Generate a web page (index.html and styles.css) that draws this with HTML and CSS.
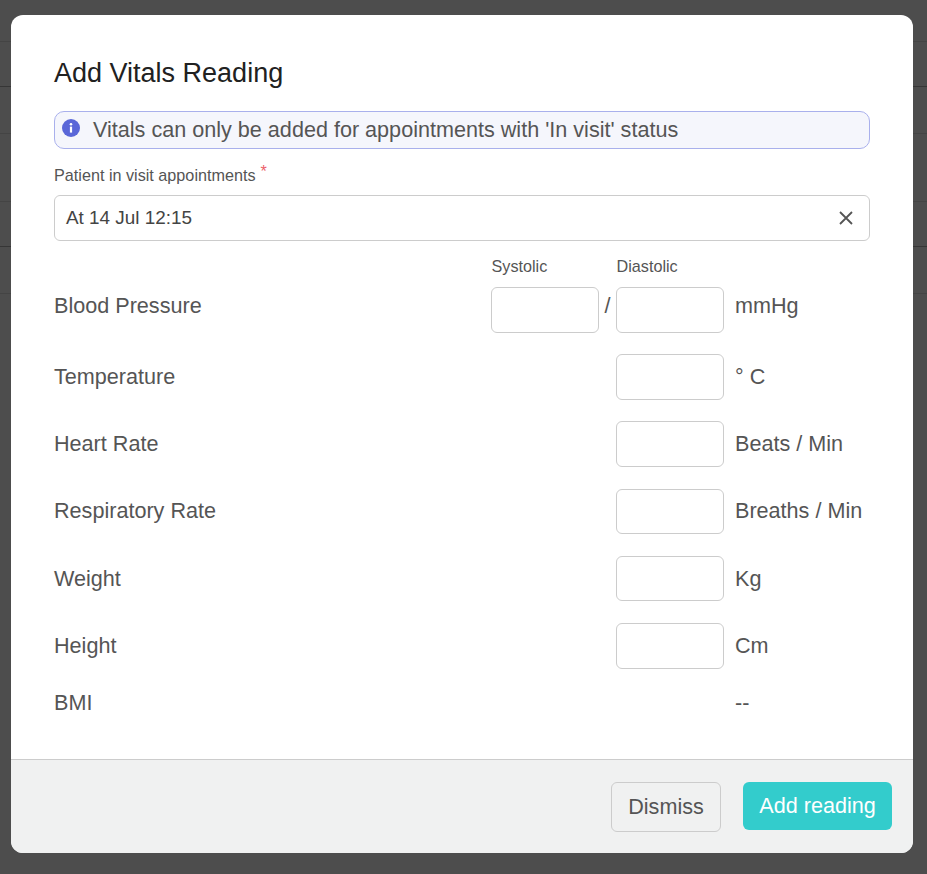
FILE: index.html
```html
<!DOCTYPE html>
<html lang="en">
<head>
<meta charset="utf-8">
<title>Add Vitals Reading</title>
<link rel="stylesheet" href="styles.css">
</head>
<body>
<div class="backdrop">
  <div class="bg-row r1"></div>
  <div class="bg-row r2 dark"></div>
  <div class="bg-row r3"></div>
  <div class="bg-row r4"></div>
  <div class="bg-row r5 dark"></div>
  <div class="bg-row r6"></div>
</div>
<section class="modal">
  <div class="body">
    <h2 class="title">Add Vitals Reading</h2>
    <div class="alert">
      <svg class="info" viewBox="0 0 18 18" width="18" height="18"><circle cx="9" cy="9" r="9" fill="#5a67d8"/><rect x="7.9" y="7.6" width="2.2" height="6" fill="#fff"/><circle cx="9" cy="5.2" r="1.3" fill="#fff"/></svg>
      <span>Vitals can only be added for appointments with 'In visit' status</span>
    </div>
    <label class="field-label">Patient in visit appointments<span class="req">*</span></label>
    <div class="select">
      <span>At 14 Jul 12:15</span>
      <svg class="clear" viewBox="0 0 16 16" width="16" height="16"><path d="M2 2 L14 14 M14 2 L2 14" stroke="#555" stroke-width="1.8" fill="none"/></svg>
    </div>
    <div class="vitals">
      <div class="row heads">
        <span class="head">Systolic</span><span class="head">Diastolic</span>
      </div>
      <div class="row bp">
        <span class="name">Blood Pressure</span>
        <div class="box"></div><span class="slash">/</span><div class="box"></div>
        <span class="unit">mmHg</span>
      </div>
      <div class="row single">
        <span class="name">Temperature</span><div class="box"></div><span class="unit">° C</span>
      </div>
      <div class="row single">
        <span class="name">Heart Rate</span><div class="box"></div><span class="unit">Beats / Min</span>
      </div>
      <div class="row single">
        <span class="name">Respiratory Rate</span><div class="box"></div><span class="unit">Breaths / Min</span>
      </div>
      <div class="row single">
        <span class="name">Weight</span><div class="box"></div><span class="unit">Kg</span>
      </div>
      <div class="row single">
        <span class="name">Height</span><div class="box"></div><span class="unit">Cm</span>
      </div>
      <div class="row bmi">
        <span class="name">BMI</span><span class="unit">--</span>
      </div>
    </div>
  </div>
  <footer class="foot">
    <button class="btn dismiss">Dismiss</button>
    <button class="btn add">Add reading</button>
  </footer>
</section>
</body>
</html>
```
FILE: styles.css
```css
* { box-sizing: border-box; }
html, body { margin: 0; height: 100%; }
body {
  height: 874px;
  overflow: hidden;
  background: #4d4d4d;
  font-family: "Liberation Sans", Arial, sans-serif;
  color: #555;
  position: relative;
  padding: 15px 14px 21px 11px;
}
.backdrop { position: absolute; inset: 0; }
.bg-row { position: absolute; left: 0; right: 0; height: 1px; background: #444; }
.bg-row.dark { background: #363636; }
.r1 { top: 41px; }
.r2 { top: 86px; }
.r3 { top: 133px; }
.r4 { top: 201px; }
.r5 { top: 246px; }
.r6 { top: 293px; }
.modal {
  position: relative;
  width: 902px;
  height: 838px;
  background: #fff;
  border-radius: 12px;
  overflow: hidden;
  display: flex;
  flex-direction: column;
}
.body { flex: 1; padding: 43px 43px 0; }
.title { margin: 0; font-size: 27px; font-weight: 400; line-height: 31px; color: #212121; }
.alert {
  margin-top: 22px;
  height: 38px;
  border: 1px solid #a9b0ec;
  border-radius: 10px;
  background: #f5f6fc;
  display: flex;
  align-items: center;
  padding: 0 7px;
  font-size: 21.6px;
  color: #555;
}
.info { margin: -5px 13px 0 0; flex: none; }
.field-label { display: block; margin-top: 17px; font-size: 16.2px; line-height: 19px; }
.req { color: #ec5f6b; margin-left: 5px; position: relative; top: -4px; }
.select {
  margin-top: 10px;
  height: 46px;
  border: 1px solid #ccc;
  border-radius: 6px;
  display: flex;
  align-items: center;
  justify-content: space-between;
  padding: 0 15px 0 11px;
  font-size: 18.9px;
  color: #444;
}
.vitals { margin-top: 16px; }
.row { display: flex; align-items: center; font-size: 21.6px; }
.name { width: 437px; flex: none; }
.heads { height: 18px; padding-left: 437.5px; font-size: 16.2px; margin-bottom: 12px; }
.head { width: 125px; }
.box { width: 108px; height: 45.6px; border: 1px solid #ccc; border-radius: 6px; flex: none; background: #fff; }
.slash { width: 17px; text-align: center; }
.bp { align-items: flex-start; }
.bp .name, .bp .slash, .bp .unit { line-height: 37px; }
.single { margin-top: 21.6px; }
.single .box { margin-left: 125px; }
.unit { margin-left: 11px; white-space: nowrap; }
.bmi { margin-top: 21px; }
.bmi .unit { margin-left: 244px; }
.foot {
  height: 94px;
  flex: none;
  background: #f0f1f1;
  border-top: 1px solid #ccc;
  display: flex;
  justify-content: flex-end;
  align-items: flex-start;
  gap: 22px;
  padding: 22px 21px 0 0;
}
.btn { font-family: inherit; font-size: 21.6px; border-radius: 6px; padding: 0; }
.dismiss { width: 110px; height: 50px; background: transparent; border: 1px solid #ccc; color: #555; }
.add { width: 149px; height: 48px; background: #33cccc; border: 0; color: #fff; }
```
